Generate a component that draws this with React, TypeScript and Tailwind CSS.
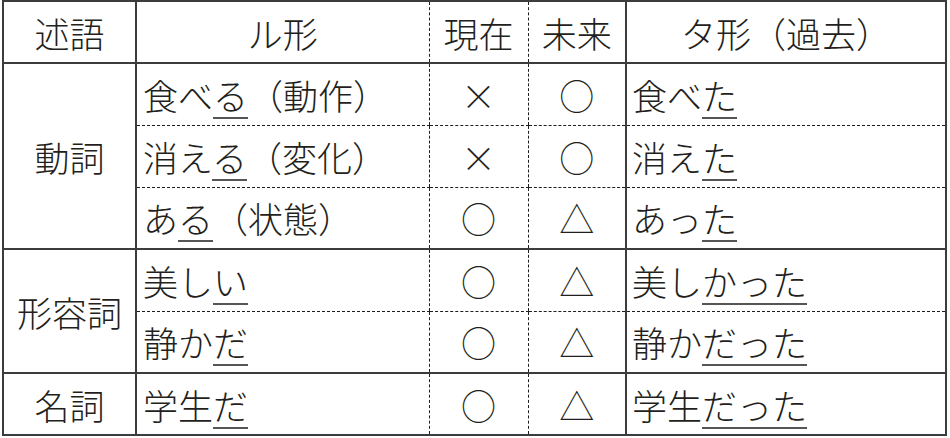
const font = "font-['Noto_Sans_CJK_JP','Noto_Sans',sans-serif]";

function U({ children }: { children: React.ReactNode }) {
  return (
    <span className="underline decoration-[1.5px] decoration-[#555] underline-offset-[7px]">
      {children}
    </span>
  );
}

const cell = "border-[#3c3c3c] h-[62px] p-0 align-middle font-light";
const dashL = "border-l [border-left-style:dashed] border-l-[#1e1e1e]";

type Row = {
  group?: { label: string; span: number };
  ru: React.ReactNode;
  now: string;
  future: string;
  ta: React.ReactNode;
  bottom: "solid" | "dashed";
};

const rows: Row[] = [
  {
    group: { label: "動詞", span: 3 },
    ru: (<>食べ<U>る</U>（動作）</>),
    now: "×",
    future: "○",
    ta: (<>食べ<U>た</U></>),
    bottom: "dashed",
  },
  {
    ru: (<>消え<U>る</U>（変化）</>),
    now: "×",
    future: "○",
    ta: (<>消え<U>た</U></>),
    bottom: "dashed",
  },
  {
    ru: (<>あ<U>る</U>（状態）</>),
    now: "○",
    future: "△",
    ta: (<>あっ<U>た</U></>),
    bottom: "solid",
  },
  {
    group: { label: "形容詞", span: 2 },
    ru: (<>美し<U>い</U></>),
    now: "○",
    future: "△",
    ta: (<>美し<U>かった</U></>),
    bottom: "dashed",
  },
  {
    ru: (<>静か<U>だ</U></>),
    now: "○",
    future: "△",
    ta: (<>静か<U>だった</U></>),
    bottom: "solid",
  },
  {
    group: { label: "名詞", span: 1 },
    ru: (<>学生<U>だ</U></>),
    now: "○",
    future: "△",
    ta: (<>学生<U>だった</U></>),
    bottom: "solid",
  },
];

export default function App() {
  return (
    <div className={`w-[950px] h-[438px] bg-white ${font} text-[#231f20]`}>
      <table className="ml-[2px] w-[945px] table-fixed border-collapse border-2 border-[#3c3c3c] text-[35px] leading-none">
        <colgroup>
          <col className="w-[133px]" />
          <col className="w-[293px]" />
          <col className="w-[99px]" />
          <col className="w-[98px]" />
          <col />
        </colgroup>
        <thead>
          <tr>
            <th className={`${cell} border-b-2 border-r-2 text-center`}>述語</th>
            <th className={`${cell} border-b-2 text-center`}>ル形</th>
            <th className={`${cell} border-b-2 ${dashL} text-center`}>現在</th>
            <th className={`${cell} border-b-2 ${dashL} text-center`}>未来</th>
            <th className={`${cell} border-b-2 border-l-2 text-center`}>タ形（過去）</th>
          </tr>
        </thead>
        <tbody>
          {rows.map((r, i) => {
            const b =
              r.bottom === "solid"
                ? "border-b-2"
                : "border-b [border-bottom-style:dashed] border-b-[#1e1e1e]";
            return (
              <tr key={i}>
                {r.group && (
                  <td rowSpan={r.group.span} className={`${cell} border-b-2 border-r-2 text-center`}>
                    {r.group.label}
                  </td>
                )}
                <td className={`${cell} ${b} pl-[6px] whitespace-nowrap`}>{r.ru}</td>
                <td className={`${cell} ${b} ${dashL} text-center`}>{r.now}</td>
                <td className={`${cell} ${b} ${dashL} text-center`}>{r.future}</td>
                <td className={`${cell} ${b} border-l-2 pl-[5px] whitespace-nowrap`}>{r.ta}</td>
              </tr>
            );
          })}
        </tbody>
      </table>
    </div>
  );
}
